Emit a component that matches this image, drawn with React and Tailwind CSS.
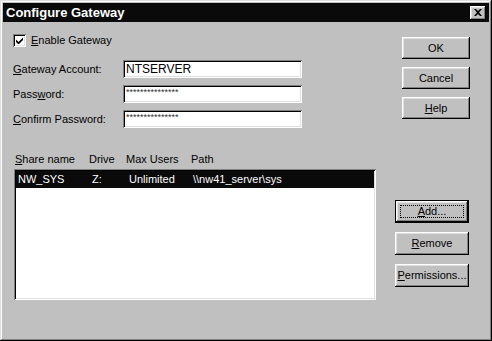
const raised =
  "shadow-[inset_-1px_-1px_#000,inset_1px_1px_#fff,inset_-2px_-2px_#808080,inset_2px_2px_#dfdfdf]";
const sunken =
  "shadow-[inset_1px_1px_#808080,inset_-1px_-1px_#fff,inset_2px_2px_#000,inset_-2px_-2px_#dfdfdf]";

function Button({ children, wide, isDefault }) {
  if (isDefault) {
    return (
      <div className="w-[74px] h-[23px] border border-black bg-[#c0c0c0]">
        <div className={`h-full ${raised} p-[4px]`}>
          <div className="h-full border border-dotted border-black flex items-center justify-center leading-none">
            {children}
          </div>
        </div>
      </div>
    );
  }
  return (
    <div
      className={`${wide ? "w-[74px] h-[23px]" : "w-[68px] h-[22px]"} bg-[#c0c0c0] ${raised} flex items-center justify-center leading-none`}
    >
      {children}
    </div>
  );
}

function Field({ label, children }) {
  return (
    <div className="flex items-center h-[18px]">
      <div className="w-[110px]">{label}</div>
      <div className={`w-[179px] h-[18px] bg-white ${sunken} flex items-center pl-[3px]`}>
        {children}
      </div>
    </div>
  );
}

export default function App() {
  return (
    <div
      className={`w-[492px] h-[341px] bg-[#c0c0c0] p-[3px] text-[11px] text-black font-['Liberation_Sans',Arial,sans-serif] shadow-[inset_-1px_-1px_#000,inset_1px_1px_#dfdfdf,inset_-2px_-2px_#808080,inset_2px_2px_#fff]`}
    >
      {/* title bar */}
      <div className="h-[19px] bg-[#0a0a0a] flex items-center justify-between pl-[3px] pr-[3px]">
        <span className="text-white font-bold text-[13px] leading-none">Configure Gateway</span>
        <div className={`w-[16px] h-[14px] bg-[#c0c0c0] ${raised} flex items-center justify-center`}>
          <svg width="8" height="7" viewBox="0 0 8 7">
            <path d="M0 0h2l2 2 2-2h2L5 3.5 8 7H6L4 5 2 7H0l3-3.5z" fill="#000" />
          </svg>
        </div>
      </div>

      {/* top section */}
      <div className="flex h-[110px]">
        <div className="w-[399px] pl-[10px] pt-[12px]">
          <div className="flex items-center h-[13px] gap-[5px]">
            <div className={`w-[13px] h-[13px] bg-white ${sunken} flex items-center justify-center`}>
              <svg width="7" height="7" viewBox="0 0 7 7">
                <path d="M0 2.5L2.5 5L7 0.5V3L2.5 7.5L0 5Z" fill="#000" />
              </svg>
            </div>
            <span>
              <span className="underline">E</span>nable Gateway
            </span>
          </div>
          <div className="mt-[13px] flex flex-col gap-[7px]">
            <Field
              label={
                <span>
                  <span className="underline">G</span>ateway Account:
                </span>
              }
            >
              <span className="text-[12px] leading-none">NTSERVER</span>
            </Field>
            <Field
              label={
                <span>
                  Pass<span className="underline">w</span>ord:
                </span>
              }
            >
              <span className="text-[9px] leading-none -mt-[3px] text-[#333]">***************</span>
            </Field>
            <Field
              label={
                <span>
                  <span className="underline">C</span>onfirm Password:
                </span>
              }
            >
              <span className="text-[9px] leading-none -mt-[3px] text-[#333]">***************</span>
            </Field>
          </div>
        </div>
        <div className="pt-[15px] flex flex-col gap-[8px]">
          <Button>OK</Button>
          <Button>Cancel</Button>
          <Button>
            <span>
              <span className="underline">H</span>elp
            </span>
          </Button>
        </div>
      </div>

      {/* list section */}
      <div className="flex">
        <div className="w-[392px] pl-[11px] pt-[22px]">
          <div className="flex h-[15px] pl-[1px] items-start leading-none">
            <div className="w-[74px]">
              <span className="underline">S</span>hare name
            </div>
            <div className="w-[37px]">Drive</div>
            <div className="w-[65px]">Max Users</div>
            <div>Path</div>
          </div>
          <div className={`w-[362px] h-[131px] bg-white ${sunken} p-[2px]`}>
            <div className="h-[17px] bg-[#0a0a0a] text-white flex items-center pl-[2px]">
              <div className="w-[74px]">NW_SYS</div>
              <div className="w-[37px]">Z:</div>
              <div className="w-[64px]">Unlimited</div>
              <div>\\nw41_server\sys</div>
            </div>
          </div>
        </div>
        <div className="pt-[68px] flex flex-col gap-[9px]">
          <Button isDefault>
            <span>
              <span className="underline">A</span>dd...
            </span>
          </Button>
          <Button wide>
            <span>
              <span className="underline">R</span>emove
            </span>
          </Button>
          <Button wide>
            <span>
              <span className="underline">P</span>ermissions...
            </span>
          </Button>
        </div>
      </div>
    </div>
  );
}
